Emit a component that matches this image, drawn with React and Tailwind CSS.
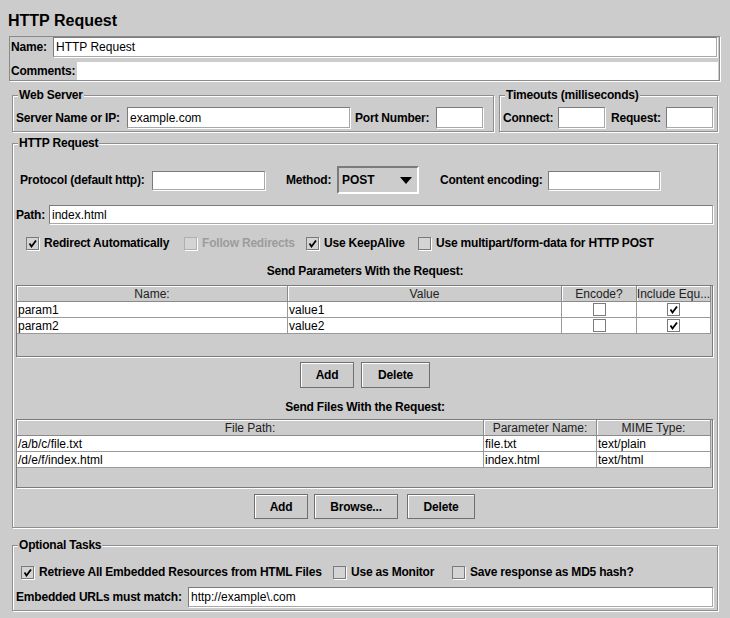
import React from "react";

const Field = ({ className = "", children }) => (
  <div
    className={`bg-white border border-t-[#7b7b7b] border-l-[#7b7b7b] border-b-[#a8a8a8] border-r-[#a8a8a8] shadow-[1px_1px_0_#fff] pl-[2px] flex items-center font-normal whitespace-nowrap overflow-hidden shrink-0 ${className}`}
  >
    {children}
  </div>
);

const Label = ({ className = "", children }) => (
  <div className={`font-bold tracking-[-0.2px] whitespace-nowrap shrink-0 ${className}`}>
    {children}
  </div>
);

const Tick = () => (
  <svg width="9" height="9" viewBox="0 0 9 9">
    <path d="M1.5 4.5 L3.5 7.5 L8 1.5" fill="none" stroke="#000" strokeWidth="1.8" />
  </svg>
);

const Box = ({ checked, disabled, white }) => (
  <div
    className={`w-[13px] h-[13px] border flex items-center justify-center shrink-0 ${
      disabled ? "border-[#b0b0b0]" : "border-[#7b7b7b]"
    } ${white ? "bg-white" : "bg-[#d4d4d4] shadow-[1px_1px_0_#fff]"}`}
  >
    {checked && <Tick />}
  </div>
);

const Check = ({ checked, disabled, label, className = "" }) => (
  <div className={`flex items-center gap-[5px] shrink-0 ${className}`}>
    <Box checked={checked} disabled={disabled} />
    <span
      className={`font-bold tracking-[-0.2px] whitespace-nowrap ${
        disabled ? "text-[#9c9c9c]" : "text-black"
      }`}
    >
      {label}
    </span>
  </div>
);

const Btn = ({ className = "", children }) => (
  <div
    className={`bg-[#cccccc] border border-[#6f6f6f] shadow-[inset_1px_1px_0_#fff] flex items-center justify-center font-bold tracking-[-0.2px] ${className}`}
  >
    {children}
  </div>
);

const Group = ({ title, className = "", children }) => (
  <fieldset
    className={`border border-[#8e8e8e] shadow-[inset_1px_1px_0_#fff,1px_1px_0_#fff] ${className}`}
  >
    <legend className="ml-[5px] px-[1px] font-bold tracking-[-0.2px] leading-[14px] bg-[#cccccc]">
      {title}
    </legend>
    {children}
  </fieldset>
);

const Head = ({ children }) => (
  <div className="h-[16px] bg-[#cccccc] border-r border-b border-[#8a8a8a] shadow-[inset_1px_1px_0_#fff] flex items-center justify-center text-[#222] whitespace-nowrap overflow-hidden">
    {children}
  </div>
);

const Cell = ({ center, children }) => (
  <div
    className={`h-[16px] bg-white border-r border-b border-[#9a9a9a] flex items-center whitespace-nowrap overflow-hidden ${
      center ? "justify-center" : "pl-[1px]"
    }`}
  >
    {children}
  </div>
);

const params = [
  { name: "param1", value: "value1", encode: false, eq: true },
  { name: "param2", value: "value2", encode: false, eq: true },
];

const files = [
  { path: "/a/b/c/file.txt", param: "file.txt", mime: "text/plain" },
  { path: "/d/e/f/index.html", param: "index.html", mime: "text/html" },
];

export default function App() {
  return (
    <div className="w-[730px] h-[618px] bg-[#cccccc] overflow-hidden font-['Liberation_Sans',Arial,sans-serif] text-[12px] text-black leading-[14px]">
      <div className="h-[36px] pl-[8px] pt-[11px] text-[16px] font-bold leading-[20px]">
        HTTP Request
      </div>

      <div className="ml-[9px] w-[711px] h-[45px] border border-[#8a8a8a] shadow-[1px_1px_0_#fff] flex flex-col">
        <div className="h-[20px] flex items-center pl-[1px]">
          <Label className="w-[42px]">Name:</Label>
          <Field className="w-[664px] h-[20px]">HTTP Request</Field>
        </div>
        <div className="mt-[5px] h-[18px] flex items-center pl-[1px]">
          <Label className="w-[66px]">Comments:</Label>
          <div className="w-[641px] h-[18px] bg-white" />
        </div>
      </div>

      <div className="mt-[7px] ml-[12px] flex gap-[5px]">
        <Group title="Web Server" className="w-[482px] pb-[3px]">
          <div className="mt-[5px] pl-[3px] h-[21px] flex items-center">
            <Label className="w-[111px]">Server Name or IP:</Label>
            <Field className="w-[223px] h-[21px]">example.com</Field>
            <Label className="ml-[5px] w-[81px]">Port Number:</Label>
            <Field className="w-[47px] h-[21px]" />
          </div>
        </Group>
        <Group title="Timeouts (milliseconds)" className="w-[219px] pb-[3px]">
          <div className="mt-[5px] pl-[3px] h-[21px] flex items-center">
            <Label className="w-[55px]">Connect:</Label>
            <Field className="w-[47px] h-[21px]" />
            <Label className="ml-[6px] w-[55px]">Request:</Label>
            <Field className="w-[47px] h-[21px]" />
          </div>
        </Group>
      </div>

      <Group title="HTTP Request" className="mt-[4px] ml-[12px] w-[706px] pb-[8px]">
        <div className="mt-[16px] pl-[7px] h-[28px] flex items-center">
          <Label className="w-[132px]">Protocol (default http):</Label>
          <Field className="w-[113px] h-[19px]" />
          <Label className="ml-[21px] w-[51px]">Method:</Label>
          <div className="w-[82px] h-[28px] border-2 border-t-[#7b7b7b] border-l-[#7b7b7b] border-b-white border-r-white bg-[#cccccc] flex items-center justify-between pl-[3px] pr-[5px]">
            <span className="font-bold">POST</span>
            <svg width="12" height="7" viewBox="0 0 12 7">
              <path d="M0 0 H12 L6 7 Z" fill="#000" />
            </svg>
          </div>
          <Label className="ml-[21px] w-[108px]">Content encoding:</Label>
          <Field className="w-[112px] h-[19px]" />
        </div>

        <div className="mt-[11px] pl-[3px] h-[19px] flex items-center">
          <Label className="w-[33px]">Path:</Label>
          <Field className="w-[664px] h-[19px]">index.html</Field>
        </div>

        <div className="mt-[12px] pl-[13px] h-[14px] flex items-center">
          <Check className="w-[158px]" checked label="Redirect Automatically" />
          <Check className="w-[122px]" disabled label="Follow Redirects" />
          <Check className="w-[112px]" checked label="Use KeepAlive" />
          <Check label="Use multipart/form-data for HTTP POST" />
        </div>

        <div className="mt-[14px] h-[14px] text-center font-bold tracking-[-0.2px]">
          Send Parameters With the Request:
        </div>

        <div className="mt-[7px] ml-[3px] w-[697px] h-[72px] border border-[#7b7b7b] shadow-[1px_1px_0_#fff] bg-[#cccccc]">
          <div className="grid grid-cols-[271px_274px_75px_74px]">
            <Head>Name:</Head>
            <Head>Value</Head>
            <Head>Encode?</Head>
            <Head>Include Equ...</Head>
            {params.map((p) => (
              <React.Fragment key={p.name}>
                <Cell>{p.name}</Cell>
                <Cell>{p.value}</Cell>
                <Cell center>
                  <Box white checked={p.encode} />
                </Cell>
                <Cell center>
                  <Box white checked={p.eq} />
                </Cell>
              </React.Fragment>
            ))}
          </div>
        </div>

        <div className="mt-[5px] flex justify-center gap-[7px]">
          <Btn className="w-[54px] h-[26px]">Add</Btn>
          <Btn className="w-[69px] h-[26px]">Delete</Btn>
        </div>

        <div className="mt-[12px] h-[14px] text-center font-bold tracking-[-0.2px]">
          Send Files With the Request:
        </div>

        <div className="mt-[5px] ml-[3px] w-[697px] h-[69px] border border-[#7b7b7b] shadow-[1px_1px_0_#fff] bg-[#cccccc]">
          <div className="grid grid-cols-[467px_113px_114px]">
            <Head>File Path:</Head>
            <Head>Parameter Name:</Head>
            <Head>MIME Type:</Head>
            {files.map((f) => (
              <React.Fragment key={f.path}>
                <Cell>{f.path}</Cell>
                <Cell>{f.param}</Cell>
                <Cell>{f.mime}</Cell>
              </React.Fragment>
            ))}
          </div>
        </div>

        <div className="mt-[6px] pl-[241px] flex">
          <Btn className="w-[54px] h-[25px]">Add</Btn>
          <Btn className="ml-[6px] w-[84px] h-[25px]">Browse...</Btn>
          <Btn className="ml-[9px] w-[68px] h-[25px]">Delete</Btn>
        </div>
      </Group>

      <Group title="Optional Tasks" className="mt-[10px] ml-[12px] w-[706px] pb-[3px]">
        <div className="mt-[13px] pl-[8px] h-[14px] flex items-center">
          <Check className="w-[312px]" checked label="Retrieve All Embedded Resources from HTML Files" />
          <Check className="w-[119px]" label="Use as Monitor" />
          <Check label="Save response as MD5 hash?" />
        </div>
        <div className="mt-[8px] pl-[3px] h-[20px] flex items-center">
          <Label className="w-[172px]">Embedded URLs must match:</Label>
          <Field className="w-[525px] h-[20px]">http://example\.com</Field>
        </div>
      </Group>
    </div>
  );
}
